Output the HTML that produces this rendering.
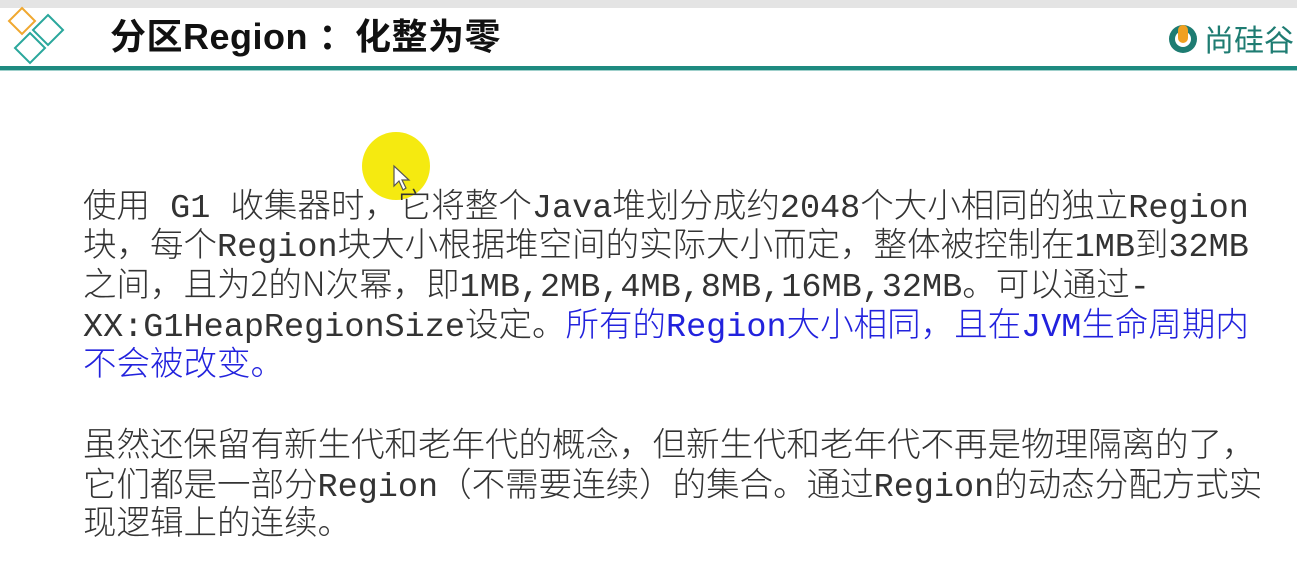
<!DOCTYPE html>
<html><head><meta charset="utf-8"><style>
body{margin:0;width:1297px;height:563px;background:#fff;overflow:hidden;position:relative;font-family:"Liberation Sans","Noto Sans CJK SC",sans-serif}
.top{position:absolute;left:0;top:0;width:1297px;height:8px;background:#e4e4e4}
.line{position:absolute;left:0;top:66px;width:1297px;height:4px;background:#1e8a80;border-bottom:1px solid #9fd0cb}
.title{position:absolute;left:110px;top:13px;font-size:36px;font-weight:bold;color:#111;font-family:"Liberation Sans","Noto Sans CJK SC",sans-serif;letter-spacing:0.5px;line-height:48px}
.l{position:absolute;left:83px;font-size:33.5px;line-height:40px;white-space:nowrap;color:#333;font-family:"Liberation Mono","Noto Sans CJK SC",monospace}
.c{font-family:"Noto Sans CJK SC",sans-serif;font-weight:300}
.b{color:#2222dd}
</style></head><body>
<div class="top"></div>
<svg style="position:absolute;left:0;top:0" width="70" height="70">
<path d="M22 8 L35 21 L22 34 L9 21 Z" fill="none" stroke="#f0a830" stroke-width="2"/>
<path d="M48 15 L63 30 L48 45 L33 30 Z" fill="none" stroke="#2aa79c" stroke-width="2"/>
<path d="M30 33 L45 48 L30 63 L15 48 Z" fill="none" stroke="#2aa79c" stroke-width="2"/>
</svg>
<div class="title">分区Region ：化整为零</div>
<svg style="position:absolute;left:1166px;top:22px" width="34" height="34"><circle cx="17" cy="17" r="14" fill="#1e7c72"/><circle cx="17" cy="17" r="8" fill="#fff"/><rect x="12" y="3" width="10" height="18" rx="5" fill="#f0a020"/></svg>
<div style="position:absolute;left:1204px;top:19px;font-size:30px;color:#1e7c72;font-family:'Noto Sans CJK SC',sans-serif;line-height:38px">尚硅谷</div>
<div class="line"></div>
<svg style="position:absolute;left:360px;top:130px" width="72" height="72"><circle cx="36" cy="36" r="34" fill="#f5ea10"/><path d="M34 36 L34 56 L39 51 L43 60 L46 58 L42 50 L49 50 Z" fill="#fff" stroke="#555" stroke-width="1.2"/></svg>
<div class="l" style="top:183px"><span class="c">使用</span> G1 <span class="c">收集器时，它将整个</span>Java<span class="c">堆划分成约</span>2048<span class="c">个大小相同的独立</span>Region</div>
<div class="l" style="top:222px"><span class="c">块，每个</span>Region<span class="c">块大小根据堆空间的实际大小而定，整体被控制在</span>1MB<span class="c">到</span>32MB</div>
<div class="l" style="top:262px"><span class="c">之间，且为2的N次幂，即</span>1MB,2MB,4MB,8MB,16MB,32MB<span class="c">。可以通过</span>-</div>
<div class="l" style="top:302px">XX:G1HeapRegionSize<span class="c">设定。</span><span class="b"><span class="c">所有的</span>Region<span class="c">大小相同，且在</span>JVM<span class="c">生命周期内</span></span></div>
<div class="l b" style="top:341px"><span class="c">不会被改变。</span></div>
<div class="l" style="top:422px"><span class="c">虽然还保留有新生代和老年代的概念，但新生代和老年代不再是物理隔离的了，</span></div>
<div class="l" style="top:462px"><span class="c">它们都是一部分</span>Region<span class="c">（不需要连续）的集合。通过</span>Region<span class="c">的动态分配方式实</span></div>
<div class="l" style="top:500px"><span class="c">现逻辑上的连续。</span></div>
</body></html>
